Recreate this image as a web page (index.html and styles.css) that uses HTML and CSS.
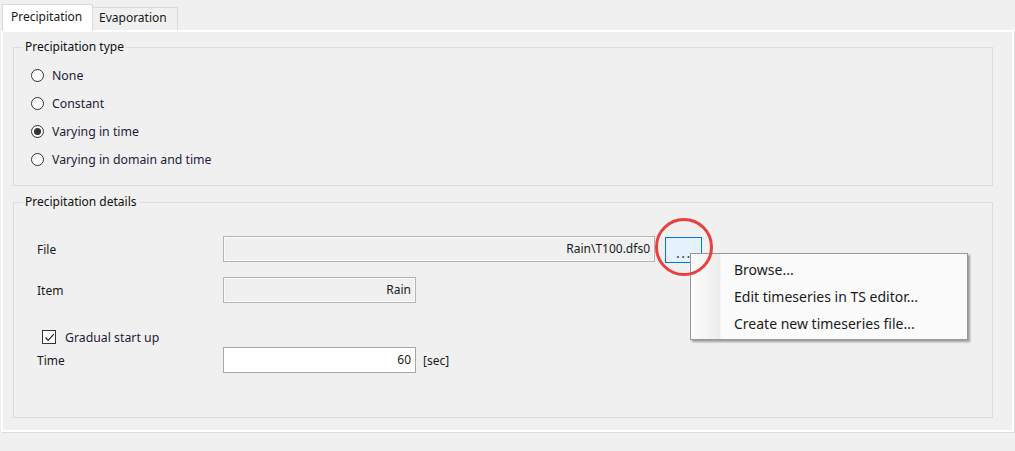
FILE: index.html
```html
<!DOCTYPE html>
<html lang="en">
<head>
    <meta charset="UTF-8">
    <meta name="viewport" content="width=device-width, initial-scale=1.0">
    <title>Precipitation</title>
    <link rel="stylesheet" href="styles.css">
</head>
<body>
    <div class="tabs">
        <div class="tab active">Precipitation</div>
        <div class="tab">Evaporation</div>
    </div>

    <div class="panel">
        <fieldset class="group">
            <legend>Precipitation type</legend>
            <div class="radio-list">
                <label class="radio"><span class="radio-box"></span>None</label>
                <label class="radio"><span class="radio-box"></span>Constant</label>
                <label class="radio"><span class="radio-box checked"></span>Varying in time</label>
                <label class="radio"><span class="radio-box"></span>Varying in domain and time</label>
            </div>
        </fieldset>

        <fieldset class="group details-group">
            <legend>Precipitation details</legend>
            <div class="details">
                <div class="field-row">
                    <span class="field-label">File</span>
                    <div class="textbox readonly file-box">Rain\T100.dfs0</div>
                    <div class="browse-wrap">
                        <button class="browse-btn">...</button>
                        <div class="context-menu">
                            <div class="menu-item">Browse...</div>
                            <div class="menu-item">Edit timeseries in TS editor...</div>
                            <div class="menu-item">Create new timeseries file...</div>
                        </div>
                        <span class="highlight-ring"></span>
                    </div>
                </div>

                <div class="field-row item-row">
                    <span class="field-label">Item</span>
                    <div class="textbox readonly short-box">Rain</div>
                </div>

                <label class="check-row">
                    <span class="check-box">
                        <svg width="11" height="11" viewBox="0 0 11 11"><polyline points="1.5,5.5 4.2,8.3 9.8,2.2" fill="none" stroke="#222" stroke-width="1.2"/></svg>
                    </span>
                    Gradual start up
                </label>

                <div class="field-row">
                    <span class="field-label">Time</span>
                    <div class="textbox short-box">60</div>
                    <span class="unit">[sec]</span>
                </div>
            </div>
        </fieldset>
    </div>
</body>
</html>
```

FILE: styles.css
```css
body { margin: 0; width: 1015px; height: 451px; background: #f0f0f0; font-family: "Noto Sans", sans-serif; font-size: 12px; color: #1a1a1a; overflow: hidden; }

/* tab strip */
.tabs { display: flex; align-items: flex-end; height: 30px; padding-left: 2px; }
.tab { box-sizing: border-box; border: 1px solid #d9d9d9; border-bottom: none; line-height: 20px; }
.tab.active { width: 91px; height: 27px; padding: 2px 0 0 8px; background: #fff; margin-bottom: -1px; position: relative; z-index: 1; }
.tab:not(.active) { width: 86px; height: 23px; padding: 0 0 0 6px; margin-left: -1px; background: #f0f0f0; }

.panel { box-sizing: border-box; height: 402px; margin: 0 1px; border: 2px solid #fff; box-shadow: 1px 1px 0 #dcdcdc; padding: 7px 19px 0 10px; }

/* group boxes */
.group { margin: 0; padding: 0; border: 1px solid #dcdcdc; }
.group legend { margin-left: 9px; padding: 0 2px; line-height: 16px; color: #111; }
.details-group { margin-top: 8px; }
.radio-list { padding: 6px 0 12px 16px; }
.details { padding: 26px 0 44px 23px; }

.radio { display: flex; align-items: center; height: 28px; gap: 8px; font-size: 12.3px; color: #1c1c3a; }
.radio-box { box-sizing: border-box; width: 13px; height: 13px; margin-left: 1px; border: 1px solid #333; border-radius: 50%; background: #fff; display: flex; align-items: center; justify-content: center; }
.radio-box.checked::after { content: ""; width: 7px; height: 7px; border-radius: 50%; background: #333; }

/* details fields */
.field-row { display: flex; align-items: center; height: 26px; }
.field-label { width: 186px; }
.item-row { margin-top: 15px; }
.textbox { box-sizing: border-box; height: 26px; line-height: 24px; padding-right: 4px; text-align: right; border: 1px solid #a8a8a8; background: #fff; }
.textbox.readonly { background: #f0f0f0; border-color: #b4b4b4; box-shadow: inset 0 0 0 1px #fafafa; }
.file-box { width: 432px; }
.short-box { width: 193px; }
.unit { margin-left: 7px; }

.check-row { display: flex; align-items: center; gap: 9px; height: 20px; margin: 24px 0 0 5px; font-size: 12.3px; color: #1c1c3a; }
.check-box { box-sizing: border-box; width: 14px; height: 14px; border: 1px solid #333; background: #fff; display: flex; align-items: center; justify-content: center; }
.check-box svg { display: block; }

/* browse button and its menu */
.browse-wrap { position: relative; margin-left: 10px; align-self: flex-start; margin-top: 1px; }
.browse-btn { display: block; box-sizing: border-box; width: 37px; height: 26px; padding: 5px 0 0 1px; border: 1px solid #0078d7; background: #e5f1fb; font-family: inherit; font-size: 14px; letter-spacing: 1.5px; color: #3a3a5a; line-height: 16px; }
.highlight-ring { position: absolute; left: -10px; top: -19px; width: 58px; height: 58px; box-sizing: border-box; border: 3px solid #e8403f; border-radius: 50%; z-index: 3; }

.context-menu { position: absolute; left: 25px; top: 16px; z-index: 2; box-sizing: border-box; width: 278px; height: 87px; padding: 2px 0; border: 1px solid #979797; box-shadow: 2px 2px 2px rgba(0,0,0,0.35); background: linear-gradient(to right, #fdfdfd 0, #ececec 29px, #fbfbfb 30px); font-size: 14px; color: #1a1a1a; }
.menu-item { height: 27px; line-height: 27px; padding-left: 43px; white-space: nowrap; }
```
